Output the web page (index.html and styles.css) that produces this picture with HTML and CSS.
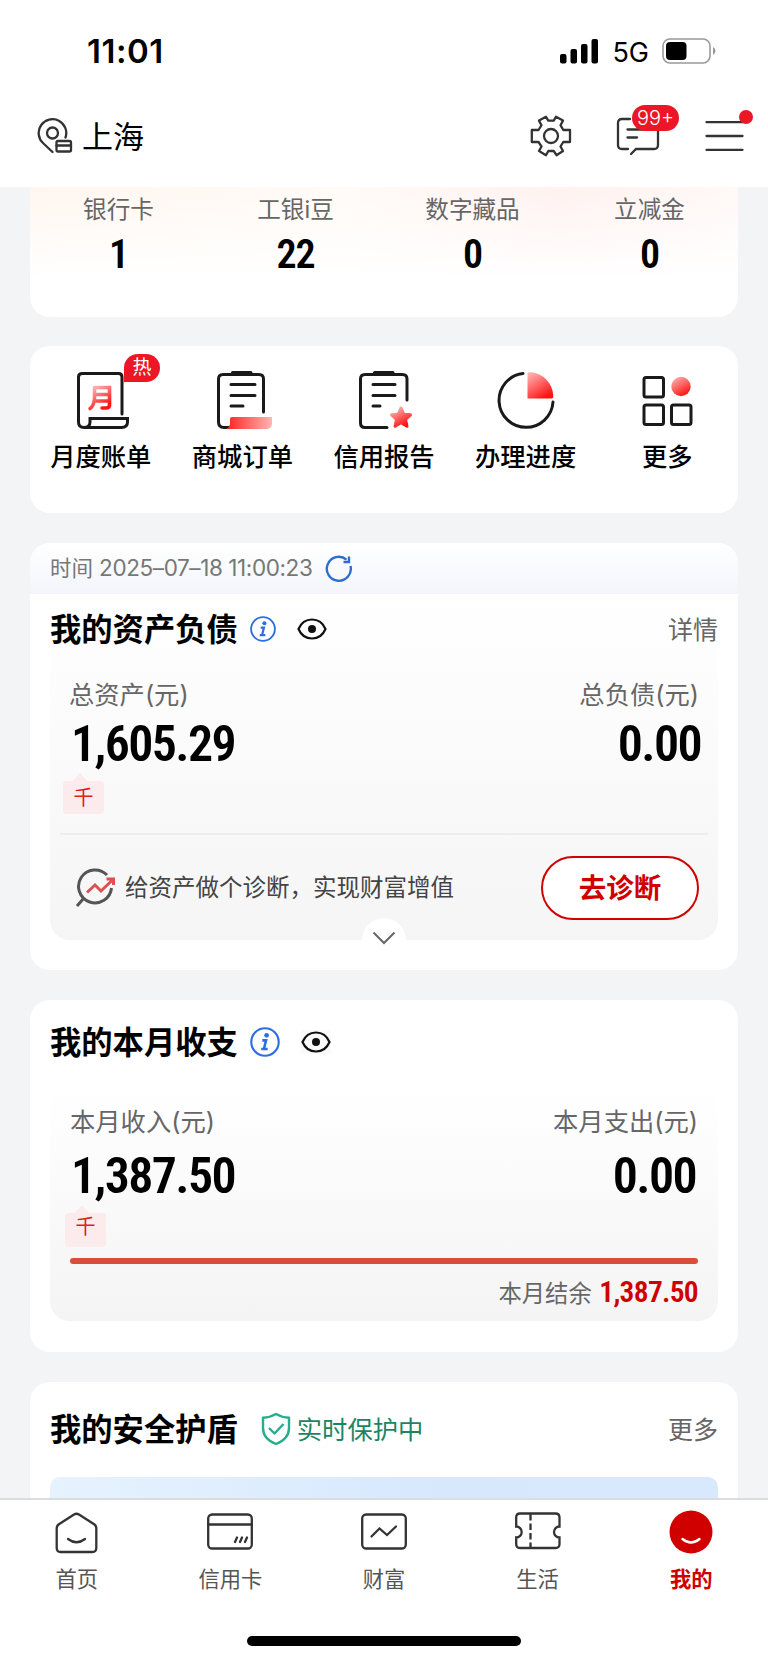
FILE: index.html
```html
<!DOCTYPE html>
<html lang="zh-CN">
<head>
    <meta charset="UTF-8">
    <title>我的</title>
    <link rel="stylesheet" href="styles.css">
</head>
<body>
    <header class="header">
        <div class="status-bar">
            <span class="clock">11:01</span>
            <div class="status-icons">
                <svg width="39" height="25" viewBox="0 0 39 25">
                    <rect x="0" y="15" width="6.5" height="9.5" rx="2"/>
                    <rect x="10.5" y="10" width="6.5" height="14.5" rx="2"/>
                    <rect x="21" y="5" width="6.5" height="19.5" rx="2"/>
                    <rect x="31.5" y="0" width="6.5" height="24.5" rx="2"/>
                </svg>
                <span class="network">5G</span>
                <svg width="54" height="26" viewBox="0 0 54 26">
                    <rect x="1" y="1" width="47" height="24" rx="7" fill="none" stroke="#999" stroke-width="1.6"/>
                    <rect x="4" y="4" width="20.5" height="18" rx="4"/>
                    <path d="M51 9v8q2.5-1.2 2.5-4T51 9z" fill="#999"/>
                </svg>
            </div>
        </div>
        <div class="nav-bar">
            <div class="location">
                <svg class="line-icon" width="36" height="36" viewBox="0 0 36 36">
                    <path d="M15.500 34L6 25A13.800 13.800 0 1 1 28.500 19.500"/>
                    <circle cx="15.500" cy="15" r="5.500"/>
                    <rect x="19.500" y="23" width="14.500" height="10.500" rx="1.500"/>
                    <path d="M19.500 27.500h14.500"/>
                </svg>
                <span>上海</span>
            </div>
            <div class="nav-actions">
                <svg class="line-icon" width="42" height="42" viewBox="0 0 42 42">
                    <path d="M16 1.800L18.300 5.700H23.700L26 1.800L33 5.600L30.500 10.200L33.300 15H40V27H33.300L30.500 31.500L33 36L26.500 40.200L23.700 36H18.300L16 40.200L9 36L11.500 31.500L8.500 27H1.800V15H8.500L11.500 10.200L9 5.600Z" stroke-linejoin="round"/>
                    <circle cx="21" cy="21" r="7"/>
                </svg>
                <div class="nav-icon">
                    <svg class="line-icon" width="44" height="40" viewBox="0 0 44 40">
                        <path d="M14 3H6Q2 3 2 7V29Q2 33 6 33H12M15 38L20 33H38Q42 33 42 29V12"/>
                        <path d="M11.500 13.500h16M11.500 21.500h9.500"/>
                    </svg>
                    <span class="count">99+</span>
                </div>
                <div class="nav-icon">
                    <svg class="line-icon" width="39" height="32" viewBox="0 0 39 32">
                        <path d="M1.500 2.200h36M1.500 16h36M1.500 29.800h36"/>
                    </svg>
                    <span class="dot"></span>
                </div>
            </div>
        </div>
    </header>

    <main class="content">
        <section class="card summary">
            <div class="summary-item"><span>银行卡</span><b class="num">1</b></div>
            <div class="summary-item"><span>工银i豆</span><b class="num">22</b></div>
            <div class="summary-item"><span>数字藏品</span><b class="num">0</b></div>
            <div class="summary-item"><span>立减金</span><b class="num">0</b></div>
        </section>

        <section class="card shortcuts">
            <div class="shortcut">
                <svg class="shortcut-icon" width="60" height="60" viewBox="0 0 60 60">
                    <defs>
                        <linearGradient id="fade" x1="0" y1="0" x2="0.600" y2="1">
                            <stop offset="0" stop-color="#ffc0c0"/>
                            <stop offset="1" stop-color="#ff1414"/>
                        </linearGradient>
                        <linearGradient id="fade-side" x1="0" y1="0" x2="1" y2="0">
                            <stop offset="0" stop-color="#ff2020"/>
                            <stop offset="1" stop-color="#ffb5b5"/>
                        </linearGradient>
                    </defs>
                    <path d="M51 44V7Q51 3.500 47.500 3.500H11.500Q7.500 3.500 7.500 7V52Q7.500 57.500 13 57.500H50.500Q56.500 57.500 56.500 52V48.500H19V52Q19 57.500 13 57.500"/>
                    <path class="mark" d="M23.500 17.500H38.500V35Q38.500 38 35 38H31M23.500 17.500V28Q23 36 19 38.500M23.500 24.500H38M23 31H38" stroke="url(#fade)"/>
                </svg>
                <span class="shortcut-name">月度账单</span>
                <span class="hot">热</span>
            </div>
            <div class="shortcut">
                <svg class="shortcut-icon" width="60" height="60" viewBox="0 0 60 60">
                    <path d="M51.500 42V9Q51.500 4.500 47 4.500H11Q6.500 4.500 6.500 9V52Q6.500 57.500 12 57.500H17M20.500 2.500H39M19 14.500H43M19 25.500H43M19 36H31"/>
                    <path class="solid" d="M18 49Q18 47 20 47H60V53Q60 59 54 59H14Q18 57 18 53Z" fill="url(#fade-side)"/>
                </svg>
                <span class="shortcut-name">商城订单</span>
            </div>
            <div class="shortcut">
                <svg class="shortcut-icon" width="60" height="60" viewBox="0 0 60 60">
                    <path d="M53 30V9Q53 4.500 48.500 4.500H11Q6.500 4.500 6.500 9V53Q6.500 57.500 11 57.500H33M20.500 2.500H39M19 14.500H41M19 25.500H41M19 36H26"/>
                    <path class="star" d="M47 38l2.900 6.300 6.600.5-5 4.500 1.500 7-6-3.600-6 3.600 1.500-7-5-4.500 6.600-.5z" fill="url(#fade)" stroke="url(#fade)"/>
                </svg>
                <span class="shortcut-name">信用报告</span>
            </div>
            <div class="shortcut">
                <svg class="shortcut-icon" width="60" height="60" viewBox="0 0 60 60">
                    <path d="M27 3.500A27 27 0 1 0 57 32"/>
                    <path class="solid" d="M31.500 4Q31.500 2 34 2A25 25 0 0 1 57.300 26Q57.500 28.500 55.500 28.500H31.500Z" fill="url(#fade)"/>
                </svg>
                <span class="shortcut-name">办理进度</span>
            </div>
            <div class="shortcut">
                <svg class="shortcut-icon" width="60" height="60" viewBox="0 0 60 60">
                    <rect x="7" y="7.500" width="19.500" height="19.500" rx="2"/>
                    <rect x="7" y="35" width="19.500" height="19.500" rx="2"/>
                    <rect x="34.500" y="35" width="19.500" height="19.500" rx="2"/>
                    <circle class="solid" cx="44" cy="16.500" r="9.700" fill="url(#fade)"/>
                </svg>
                <span class="shortcut-name">更多</span>
            </div>
        </section>

        <section class="card assets">
            <div class="update-time">
                <span>时间 <span class="stamp">2025–07–18 11:00:23</span></span>
                <svg width="28" height="28" viewBox="0 0 28 28" fill="none" stroke="#2d6dcc" stroke-width="2.400">
                    <path d="M21.500 4.600A12 12 0 1 0 25.500 11"/>
                    <path d="M24 1.500V7H18.500"/>
                </svg>
            </div>
            <div class="assets-panel">
                <div class="card-head">
                    <h2>我的资产负债</h2>
                    <svg class="info" width="26" height="26" viewBox="0 0 28 28">
                        <circle cx="14" cy="14" r="12.800"/>
                        <circle class="info-dot" cx="15.500" cy="7.800" r="2.200"/>
                        <path class="info-stem" d="M11.500 12.500H15L13 20.500H16.500M10.500 20.500H13"/>
                    </svg>
                    <svg class="eye" width="30" height="24" viewBox="0 0 30 24">
                        <path d="M1.500 12Q5.500 2.500 15 2.500T28.500 12Q24.500 21.500 15 21.500T1.500 12Z"/>
                        <circle cx="15" cy="12" r="4"/>
                    </svg>
                    <span class="more">详情</span>
                </div>
                <div class="pair labels"><span>总资产(元)</span><span>总负债(元)</span></div>
                <div class="pair amounts"><b class="num">1,605.29</b><b class="num">0.00</b></div>
                <span class="unit">千</span>
                <div class="diagnose">
                    <svg width="42" height="40" viewBox="0 0 42 40" fill="none" stroke-width="3">
                        <path d="M32 7A16.500 16.500 0 1 0 36.500 20M9 30L2 38" stroke="#555"/>
                        <path d="M12 24.500L20 17L26 23L38 11.500M31.500 11H38.500V17" stroke="#dd5050"/>
                    </svg>
                    <span>给资产做个诊断，实现财富增值</span>
                    <button>去诊断</button>
                </div>
                <div class="expand">
                    <svg width="24" height="14" viewBox="0 0 24 14" fill="none" stroke="#666" stroke-width="2">
                        <path d="M1.500 1.500L12 12L22.500 1.500"/>
                    </svg>
                </div>
            </div>
        </section>

        <section class="card monthly">
            <div class="card-head">
                <h2>我的本月收支</h2>
                <svg class="info" width="30" height="30" viewBox="0 0 28 28">
                    <circle cx="14" cy="14" r="12.800"/>
                    <circle class="info-dot" cx="15.500" cy="7.800" r="2.200"/>
                    <path class="info-stem" d="M11.500 12.500H15L13 20.500H16.500M10.500 20.500H13"/>
                </svg>
                <svg class="eye" width="30" height="24" viewBox="0 0 30 24">
                    <path d="M1.500 12Q5.500 2.500 15 2.500T28.500 12Q24.500 21.500 15 21.500T1.500 12Z"/>
                    <circle cx="15" cy="12" r="4"/>
                </svg>
            </div>
            <div class="monthly-panel">
                <div class="pair labels"><span>本月收入(元)</span><span>本月支出(元)</span></div>
                <div class="pair amounts"><b class="num">1,387.50</b><b class="num">0.00</b></div>
                <span class="unit">千</span>
                <div class="bar"></div>
                <div class="balance">本月结余 <b class="num">1,387.50</b></div>
            </div>
        </section>

        <section class="card shield">
            <div class="card-head">
                <h2>我的安全护盾</h2>
                <svg width="30" height="34" viewBox="0 0 30 34" fill="none" stroke="#28ad8b" stroke-width="2.400" stroke-linejoin="round">
                    <path d="M15 2Q21 5.500 28 5.800V16Q28 27 15 32Q2 27 2 16V5.800Q9 5.500 15 2Z"/>
                    <path d="M8 16L13.500 21.500L22.500 12"/>
                </svg>
                <span class="protecting">实时保护中</span>
                <span class="more">更多</span>
            </div>
            <div class="banner"></div>
        </section>
    </main>

    <footer class="footer">
        <nav class="tabs">
            <div class="tab">
                <svg class="line-icon" width="46" height="46" viewBox="0 0 46 46">
                    <path d="M4.500 14.500L20 4.500Q22.500 3 25 4.500L40.500 14.500Q42.300 16 42.300 18V38Q42.300 42 38.300 42H6.700Q2.700 42 2.700 38V18Q2.700 16 4.500 14.500Z"/>
                    <path d="M14 29Q22.500 35.500 31 29"/>
                </svg>
                <span>首页</span>
            </div>
            <div class="tab">
                <svg class="line-icon" width="46" height="46" viewBox="0 0 46 46">
                    <rect x="1.200" y="4.500" width="43.600" height="34" rx="4"/>
                    <path d="M1 14.500H45M28 32L30 27.500M33 32L35 27.500M38 32L40 27.500"/>
                </svg>
                <span>信用卡</span>
            </div>
            <div class="tab">
                <svg class="line-icon" width="46" height="46" viewBox="0 0 46 46">
                    <rect x="1.200" y="4.500" width="43.600" height="34" rx="4"/>
                    <path d="M10.500 26.500L18.500 18.500L26 25L35 16.500"/>
                </svg>
                <span>财富</span>
            </div>
            <div class="tab">
                <svg class="line-icon" width="46" height="46" viewBox="0 0 46 46">
                    <path d="M5 3.500H40.500Q44.500 3.500 44.500 7.500V16.500A5.500 5.500 0 0 0 44.500 27.500V34Q44.500 38 40.500 38H5Q1.200 38 1.200 34V27.500A5.500 5.500 0 0 0 1.200 16.500V7.500Q1.200 3.500 5 3.500Z"/>
                    <path class="perforation" d="M15.500 4V38"/>
                </svg>
                <span>生活</span>
            </div>
            <div class="tab active">
                <svg width="46" height="46" viewBox="0 0 46 46">
                    <circle cx="23" cy="22" r="21.500" fill="#d00000"/>
                    <path d="M14.500 29Q23 36 31.500 29" fill="none" stroke="#fff" stroke-width="2.400" stroke-linecap="round"/>
                </svg>
                <span>我的</span>
            </div>
        </nav>
        <div class="home-indicator"></div>
    </footer>
</body>
</html>
```
FILE: styles.css
```css
:root {
    --red: #d00000;
    --badge: #ec1626;
    --grey: #666;
    --page: #f3f4f6;
}

* {
    box-sizing: border-box;
}

body {
    margin: 0;
    height: 1663px;
    display: flex;
    flex-direction: column;
    overflow: hidden;
    background: var(--page);
    color: #000;
    font-family: Inter, "Noto Sans CJK SC", sans-serif;
}

svg {
    display: block;
    flex: none;
}

h2 {
    margin: 0 0 4px;
    font-size: 31.300px;
    font-weight: 700;
}

.num {
    font-family: Roboto, sans-serif;
    font-weight: 600;
    font-stretch: 75%;
}

.line-icon {
    fill: none;
    stroke: #333;
    stroke-width: 2.300;
    stroke-linecap: round;
}

/* header */
.header {
    flex: none;
    height: 187px;
    background: #fff;
}

.status-bar {
    height: 102px;
    padding: 0 52px 0 87px;
    display: flex;
    align-items: center;
    justify-content: space-between;
}

.clock {
    font-size: 33px;
    font-weight: 600;
    letter-spacing: 0.5px;
}

.status-icons {
    display: flex;
    align-items: center;
    gap: 13px;
}

.network {
    margin-top: 2px;
    font-size: 27px;
    font-weight: 400;
}

.nav-bar {
    height: 67px;
    padding: 0 24px 0 37px;
    display: flex;
    align-items: center;
    justify-content: space-between;
}

.location {
    display: flex;
    align-items: center;
    gap: 9px;
    font-size: 31px;
}

.location span {
    margin-bottom: 3px;
}

.nav-actions {
    display: flex;
    align-items: center;
    gap: 45px;
}

.nav-actions > .line-icon {
    margin-right: -1px;
}

.nav-icon {
    position: relative;
}

.count {
    position: absolute;
    left: 16px;
    top: -11px;
    width: 47px;
    height: 26px;
    border-radius: 13px;
    background: var(--badge);
    color: #fff;
    font-size: 20px;
    font-weight: 300;
    line-height: 26px;
    text-align: center;
}

.dot {
    position: absolute;
    right: -9px;
    top: -10px;
    width: 14px;
    height: 14px;
    border-radius: 50%;
    background: var(--badge);
}

/* cards */
.content {
    flex: 1;
    min-height: 0;
    padding: 0 30px;
    display: flex;
    flex-direction: column;
    gap: 30px;
    overflow: hidden;
}

.card {
    flex: none;
    border-radius: 20px;
    background: #fff;
    overflow: hidden;
}

.card-head {
    display: flex;
    align-items: center;
}

.more {
    margin: 0 0 2px auto;
    color: var(--grey);
    font-size: 25px;
}

.summary {
    height: 130px;
    margin-bottom: -1px;
    padding-top: 1px;
    display: grid;
    grid-template-columns: repeat(4, 1fr);
    border-radius: 0 0 20px 20px;
    background: linear-gradient(to bottom, rgba(255,255,255,0.1), #fff 70%), linear-gradient(to right, #fff5ed, #fffaf6 45%, #fff0ee 75%, #fff8f6);
}

.summary-item {
    display: flex;
    flex-direction: column;
    align-items: center;
    color: var(--grey);
    font-size: 23.600px;
    line-height: 44px;
}

.summary-item .num {
    color: #000;
    font-size: 40px;
    line-height: 45px;
    letter-spacing: -1px;
}

.shortcuts {
    height: 167px;
    display: grid;
    grid-template-columns: repeat(5, 1fr);
}

.shortcut {
    position: relative;
    padding-top: 24px;
    display: flex;
    flex-direction: column;
    align-items: center;
}

.shortcut-icon {
    fill: none;
    stroke: #1a1a1a;
    stroke-width: 3;
    stroke-linecap: round;
}

.shortcut-icon .mark {
    stroke-width: 3.600;
}

.shortcut-icon .solid {
    stroke: none;
}

.shortcut-icon .star {
    stroke-linejoin: round;
}

.shortcut-name {
    margin-top: 9px;
    font-size: 25.300px;
    font-weight: 500;
    line-height: 36px;
}

.hot {
    position: absolute;
    left: 94px;
    top: 8px;
    width: 36px;
    height: 28px;
    border-radius: 14px 14px 14px 0;
    background: var(--badge);
    color: #fff;
    font-size: 19px;
    line-height: 27px;
    text-align: center;
}

/* assets */
.assets {
    height: 427px;
}

.update-time {
    height: 51px;
    padding: 0 20px;
    display: flex;
    align-items: center;
    gap: 13px;
    background: linear-gradient(#fff, #f3f5fb);
    color: #777;
    font-size: 21.500px;
}

.update-time > span {
    margin-bottom: 5px;
}

.stamp {
    font-size: 22.500px;
    letter-spacing: -0.4px;
}

.assets-panel {
    position: relative;
    height: 346px;
    margin: 0 20px;
    padding-top: 11px;
    border-radius: 0 0 20px 20px;
    background: linear-gradient(#fff, #f5f5f5);
}

.assets-panel .card-head {
    height: 48px;
}

.info {
    margin-left: 12px;
    fill: none;
    stroke: #2d6ee0;
    stroke-width: 2;
}

.info-dot {
    fill: #2d6ee0;
    stroke: none;
}

.info-stem {
    stroke-width: 2.400;
}

.eye {
    margin-left: 21px;
    fill: none;
    stroke: #111;
    stroke-width: 2.200;
}

.eye circle {
    fill: #111;
    stroke: none;
}

.pair {
    padding: 0 20px;
    display: flex;
    justify-content: space-between;
}

.labels {
    margin-top: 24px;
    color: var(--grey);
    font-size: 25.300px;
    line-height: 36px;
}

.assets-panel .labels {
    padding: 0 19px;
}

.amounts {
    padding: 0 22px 0 21px;
    font-size: 50px;
    line-height: 62px;
    letter-spacing: -1.600px;
}

.assets-panel .amounts {
    padding-right: 17px;
}

.unit {
    position: relative;
    display: block;
    width: 41px;
    height: 33px;
    margin: 6px 0 0 13px;
    border-radius: 4px;
    background: #fbebec;
    color: #dc1f1f;
    font-size: 20px;
    line-height: 35px;
    text-align: center;
}

.unit::before {
    content: "";
    position: absolute;
    left: 10px;
    top: -8px;
    border: 7px solid transparent;
    border-top: 0;
    border-bottom: 8px solid #fbebec;
}

.diagnose {
    height: 107px;
    margin: 19px 10px 0;
    padding: 0 9px 0 15px;
    display: flex;
    align-items: center;
    border-top: 2px solid #ededed;
    color: #444;
    font-size: 23.500px;
}

.diagnose span {
    margin: 0 0 3px 8px;
}

.diagnose button {
    width: 158px;
    height: 64px;
    margin-left: auto;
    padding: 0 0 3px;
    border: 2px solid var(--red);
    border-radius: 32px;
    background: #fff;
    color: var(--red);
    font: inherit;
    font-size: 27.500px;
    font-weight: 700;
}

.expand {
    position: absolute;
    left: 50%;
    bottom: -22px;
    width: 44px;
    height: 44px;
    margin-left: -22px;
    padding-top: 13px;
    display: flex;
    justify-content: center;
    border-radius: 50%;
    background: #fff;
}

/* monthly */
.monthly {
    height: 352px;
    padding: 18px 20px 0;
}

.monthly .card-head {
    height: 48px;
}

.monthly .eye {
    background: #fafafa;
}

.monthly-panel {
    height: 231px;
    margin-top: 24px;
    padding-top: 14px;
    border-radius: 20px;
    background: linear-gradient(#fff, #f4f4f4);
}

.monthly-panel .labels {
    margin-top: 0;
}

.monthly-panel .amounts {
    padding-top: 5px;
}

.monthly-panel .unit {
    height: 34px;
    margin-left: 15px;
    line-height: 28px;
}

.bar {
    height: 6px;
    margin: 11px 20px 0;
    border-radius: 3px;
    background: #dc4c3e;
}

.balance {
    margin: 8px 20px 0;
    color: var(--grey);
    font-size: 23.300px;
    line-height: 40px;
    text-align: right;
}

.balance .num {
    margin-left: 1px;
    color: var(--red);
    font-size: 29.500px;
    letter-spacing: -0.700px;
}

/* shield */
.shield {
    height: 300px;
    padding: 23px 20px 0;
}

.shield .card-head {
    height: 48px;
}

.shield .card-head svg {
    margin-left: 23px;
}

.protecting {
    margin: 0 0 2px 6px;
    color: #1d8463;
    font-size: 25.300px;
}

.banner {
    height: 200px;
    margin-top: 24px;
    border-radius: 10px;
    background: linear-gradient(to right, #e6f2fe, #d7e8fd 60%, #d9e9fd);
}

/* tab bar */
.footer {
    flex: none;
    height: 165px;
    border-top: 2px solid #dcdcdc;
    background: #fff;
}

.tabs {
    height: 136px;
    padding-top: 10px;
    display: grid;
    grid-template-columns: repeat(5, 1fr);
}

.tab {
    display: flex;
    flex-direction: column;
    align-items: center;
    gap: 7px;
    color: #555;
    font-size: 21.300px;
    line-height: 32px;
}

.tab.active {
    color: var(--red);
    font-weight: 700;
}

.perforation {
    stroke-linecap: butt;
    stroke-dasharray: 6.500 3;
}

.home-indicator {
    width: 274px;
    height: 10px;
    margin: 0 auto;
    border-radius: 5px;
    background: #000;
}
```
